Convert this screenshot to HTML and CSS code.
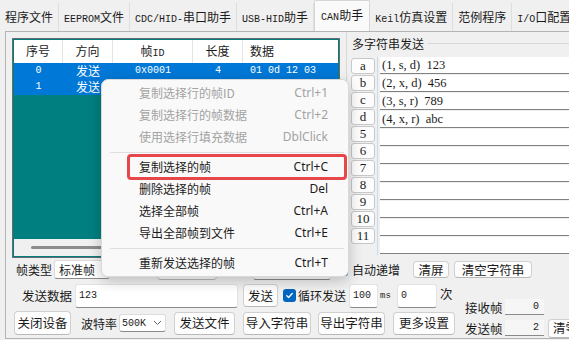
FILE: index.html
```html
<!DOCTYPE html>
<html lang="zh-CN">
<head>
    <meta charset="UTF-8">
    <title>CAN助手</title>
    <link rel="stylesheet" href="styles.css">
</head>
<body>
    <nav class="tabs">
        <span class="tab">程序文件</span>
        <span class="tab"><span class="mono">EEPROM</span>文件</span>
        <span class="tab"><span class="mono">CDC/HID-</span>串口助手</span>
        <span class="tab"><span class="mono">USB-HID</span>助手</span>
        <span class="tab active"><span class="mono">CAN</span>助手</span>
        <span class="tab"><span class="mono">Keil</span>仿真设置</span>
        <span class="tab">范例程序</span>
        <span class="tab"><span class="mono">I/O</span>口配置</span>
    </nav>

    <section class="page">
        <div class="top">
            <div class="frames">
                <div class="frame-row head">
                    <span>序号</span><span>方向</span><span>帧<span class="mono">ID</span></span><span>长度</span><span class="data">数据</span>
                </div>
                <div class="frame-row sel">
                    <span class="mono">0</span><span>发送</span><span class="mono">0x0001</span><span class="mono">4</span><span class="mono data">01 0d 12 03</span>
                </div>
                <div class="frame-row sel">
                    <span class="mono">1</span><span>发送</span><span></span><span></span><span></span>
                </div>
                <div class="frame-fill"></div>
                <div class="hscroll"><span class="thumb"></span></div>
            </div>

            <div class="multi">
                <div class="multi-head"><span>多字符串发送</span><i></i></div>
                <div class="multi-body">
                    <div class="keys">
                        <button class="key">a</button>
                        <button class="key">b</button>
                        <button class="key">c</button>
                        <button class="key">d</button>
                        <button class="key">5</button>
                        <button class="key">6</button>
                        <button class="key">7</button>
                        <button class="key">8</button>
                        <button class="key">9</button>
                        <button class="key">10</button>
                        <button class="key">11</button>
                    </div>
                    <div class="fields">
                        <div class="field">(1, s, d)&nbsp; 123</div>
                        <div class="field">(2, x, d)&nbsp; 456</div>
                        <div class="field">(3, s, r)&nbsp; 789</div>
                        <div class="field">(4, x, r)&nbsp; abc</div>
                        <div class="field"></div>
                        <div class="field"></div>
                        <div class="field"></div>
                        <div class="field"></div>
                        <div class="field"></div>
                        <div class="field"></div>
                        <div class="field"></div>
                    </div>
                </div>
            </div>
        </div>

        <div class="row row-a">
            <span class="lbl-type">帧类型</span>
            <span class="combo combo-type">标准帧</span>
            <span class="btn btn-kind"></span>
            <span class="edit edit-id"></span>
            <span class="check check-inc"></span>
            <span class="lbl-inc">自动递增</span>
            <button class="btn btn-clear">清屏</button>
            <button class="btn btn-clear-str">清空字符串</button>
        </div>

        <div class="lower">
            <div class="lower-left">
                <div class="row row-b">
                    <span class="lbl-data">发送数据</span>
                    <span class="edit edit-data mono">123</span>
                    <button class="btn btn-send">发送</button>
                    <span class="check check-loop"><svg width="9" height="9" viewBox="0 0 10 10"><path d="M2 5.2l2 2 4-4.4" fill="none" stroke="#fff" stroke-width="1.5" stroke-linecap="round" stroke-linejoin="round"/></svg></span>
                    <span class="lbl-loop">循环发送</span>
                    <span class="edit edit-ms mono">100</span>
                    <span class="lbl-ms mono">ms</span>
                    <span class="edit edit-count mono">0</span>
                    <span class="lbl-times">次</span>
                </div>
                <div class="row row-c">
                    <button class="btn btn-close">关闭设备</button>
                    <span class="lbl-baud">波特率</span>
                    <span class="combo combo-baud"><span class="mono">500K</span><svg width="9" height="6" viewBox="0 0 9 6"><path d="M1 1l3.5 3.5L8 1" fill="none" stroke="#666" stroke-width="1"/></svg></span>
                    <button class="btn btn-file">发送文件</button>
                    <button class="btn btn-import">导入字符串</button>
                    <button class="btn btn-export">导出字符串</button>
                    <button class="btn btn-more">更多设置</button>
                </div>
            </div>
            <div class="stats">
                <div class="stat"><span class="stat-lbl">接收帧</span><span class="stat-val mono">0</span></div>
                <div class="stat"><span class="stat-lbl">发送帧</span><span class="stat-val mono">2</span><button class="btn btn-reset">清零</button></div>
            </div>
        </div>

        <div class="menu">
            <div class="menu-item off"><span>复制选择行的帧ID</span><span class="menu-key">Ctrl+1</span></div>
            <div class="menu-item off"><span>复制选择行的帧数据</span><span class="menu-key">Ctrl+2</span></div>
            <div class="menu-item off"><span>使用选择行填充数据</span><span class="menu-key">DblClick</span></div>
            <div class="menu-sep"></div>
            <div class="menu-item mark"><span>复制选择的帧</span><span class="menu-key">Ctrl+C</span></div>
            <div class="menu-item"><span>删除选择的帧</span><span class="menu-key">Del</span></div>
            <div class="menu-item"><span>选择全部帧</span><span class="menu-key">Ctrl+A</span></div>
            <div class="menu-item"><span>导出全部帧到文件</span><span class="menu-key">Ctrl+E</span></div>
            <div class="menu-sep"></div>
            <div class="menu-item"><span>重新发送选择的帧</span><span class="menu-key">Ctrl+T</span></div>
        </div>
    </section>
</body>
</html>
```

FILE: styles.css
```css
* {
    box-sizing: border-box;
}

body {
    margin: 0;
    width: 569px;
    height: 340px;
    overflow: hidden;
    background-color: #f0f0f0;
    font-family: "Noto Sans CJK SC", sans-serif;
    font-size: 12px;
    color: #1b1b1b;
}

.mono {
    font-family: "Liberation Mono", "Noto Sans CJK SC", monospace;
    font-size: 10px;
}

/* tab strip */
.tabs {
    display: flex;
    align-items: flex-end;
    height: 31px;
    white-space: nowrap;
}

.tab {
    height: 28px;
    line-height: 27px;
    padding: 0 5px;
    border-right: 1px solid #dedede;
}

.tab.active {
    height: 31px;
    line-height: 28px;
    padding: 0 6px;
    background-color: #fafafa;
    border: 1px solid #d6d6d6;
    border-bottom: none;
    border-radius: 2px 2px 0 0;
}

/* tab page */
.page {
    position: relative;
    height: 308px;
    margin-left: 5px;
    padding-left: 6px;
    border: 1px solid #b4b4b4;
    border-right: none;
}

.top {
    display: flex;
    height: 226px;
}

.frames {
    display: flex;
    flex-direction: column;
    width: 328px;
    height: 220px;
    margin-top: 6px;
    padding: 1px;
    border: 1px solid #6a6a6a;
    background-color: #007f80;
}

.frame-row {
    display: grid;
    grid-template-columns: 49px 50px 80px 50px 1fr;
    height: 16px;
    line-height: 16px;
    text-align: center;
    white-space: nowrap;
}

.frame-row .data {
    text-align: left;
    padding-left: 7px;
}

.frame-row.head {
    height: 23px;
    line-height: 22px;
    background-color: #fff;
}

.frame-row.head > span {
    border-right: 1px solid #e4e4e4;
}

.frame-row.head > span:last-child {
    border-right: none;
}

.frame-row.sel {
    background-color: #0078d7;
    color: #fff;
}

.frame-fill {
    flex: 1;
}

.hscroll {
    height: 17px;
    padding: 7px 0 0 17px;
    background-color: #f0f0f0;
}

.thumb {
    display: block;
    width: 290px;
    height: 3px;
    border-radius: 2px;
    background-color: #8b8b8b;
}

/* multi string group */
.multi {
    flex: 1;
    margin-left: 6px;
    border-left: 1px solid #d8d8d8;
}

.multi-head {
    display: flex;
    height: 25px;
}

.multi-head span {
    padding: 1px 4px 0 5px;
    line-height: 22px;
}

.multi-head i {
    flex: 1;
    height: 1px;
    margin-top: 11px;
    background-color: #d8d8d8;
}

.multi-body {
    display: flex;
}

.keys {
    width: 30px;
    padding-left: 4px;
}

.key {
    display: block;
    width: 24px;
    height: 16px;
    margin: 1px 0;
    padding: 0;
    border: 1px solid #c8c8c8;
    border-radius: 3px;
    background-color: #fdfdfd;
    font-family: "Liberation Serif", serif;
    font-size: 13px;
    line-height: 14px;
    color: #1b1b1b;
}

.fields {
    flex: 1;
    padding-left: 2px;
    border-left: 1px solid #c9dbea;
}

.field {
    height: 17px;
    margin-bottom: 1px;
    padding-left: 2px;
    background-color: #fff;
    border-bottom: 1px solid #808080;
    font-family: "Liberation Serif", serif;
    font-size: 12.5px;
    line-height: 16px;
    white-space: nowrap;
}

/* bottom controls */
.row {
    display: flex;
    align-items: center;
    white-space: nowrap;
}

.row-a {
    height: 21px;
    margin-top: 1px;
}

.lower {
    display: flex;
    margin-top: 1px;
}

.lower-left {
    width: 443px;
}

.row-b {
    height: 29px;
    font-size: 12.5px;
}

.row-c {
    height: 26px;
    font-size: 12.5px;
}

.btn {
    display: block;
    height: 23px;
    padding: 0;
    border: 1px solid #d0d0d0;
    border-bottom-color: #b8b8b8;
    border-radius: 4px;
    background-color: #fdfdfd;
    font-family: inherit;
    font-size: 12.5px;
    line-height: 20px;
    color: #1b1b1b;
    white-space: nowrap;
}

.edit {
    display: block;
    height: 24px;
    padding-left: 3px;
    background-color: #fff;
    border: 1px solid #e3e3e3;
    border-bottom-color: #8a8a8a;
    border-radius: 3px;
    line-height: 22px;
}

.combo {
    display: flex;
    align-items: center;
    justify-content: space-between;
    height: 19px;
    padding: 0 4px;
    background-color: #fff;
    border: 1px solid #dcdcdc;
    border-bottom-color: #8a8a8a;
    border-radius: 3px;
}

.check {
    display: flex;
    align-items: center;
    justify-content: center;
    width: 13px;
    height: 13px;
    border-radius: 3px;
    background-color: #0067c0;
}

/* row a */
.lbl-type { margin-left: 4px; width: 36px; }
.combo-type { margin-left: 2px; width: 56px; }
.btn-kind { margin-left: 47px; width: 60px; height: 20px; }
.edit-id { margin-left: 36px; width: 78px; height: 20px; }
.check-inc { margin-left: 4px; }
.lbl-inc { margin-left: 4px; width: 48px; }
.btn-clear { margin-left: 13px; width: 36px; height: 17px; line-height: 14px; }
.btn-clear-str { margin-left: 5px; width: 78px; height: 17px; line-height: 14px; }

/* row b */
.lbl-data { margin-left: 10px; width: 50px; }
.edit-data { margin-left: 3px; width: 163px; }
.btn-send { margin-left: 5px; width: 35px; }
.check-loop { margin-left: 5px; }
.lbl-loop { margin-left: 2px; width: 48px; font-size: 12px; }
.edit-ms { margin-left: 3px; width: 29px; }
.lbl-ms { margin-left: 2px; width: 13px; font-size: 9px; }
.edit-count { margin-left: 4px; width: 40px; }
.lbl-times { margin-left: 3px; margin-top: -4px; }

/* row c */
.btn-close { margin-left: 2px; width: 57px; height: 24px; }
.lbl-baud { margin-left: 10px; width: 36px; font-size: 12px; }
.combo-baud { margin-left: 2px; width: 47px; height: 18px; padding: 0 3px 0 2px; }
.btn-file { margin-left: 8px; width: 61px; }
.btn-import { margin-left: 8px; width: 68px; }
.btn-export { margin-left: 7px; width: 67px; }
.btn-more { margin-left: 8px; width: 62px; }

/* frame counters */
.stats {
    display: flex;
    flex-direction: column;
    gap: 3px;
    margin-left: 10px;
    padding-top: 17px;
    white-space: nowrap;
}

.stat {
    display: flex;
    align-items: center;
    height: 18px;
}

.stat-lbl {
    width: 36px;
    font-size: 12.5px;
}

.stat-val {
    width: 39px;
    height: 16px;
    margin-left: 4px;
    padding-right: 5px;
    background-color: #f6f6f6;
    border-bottom: 1px solid #8a8a8a;
    text-align: right;
    line-height: 15px;
}

.btn-reset {
    width: 40px;
    height: 19px;
    margin-left: 4px;
    line-height: 16px;
    text-align: left;
    padding-left: 4px;
}

/* context menu */
.menu {
    position: absolute;
    left: 95px;
    top: 47px;
    width: 248px;
    padding: 2px 0;
    background-color: #f9f9f9;
    border: 1px solid #d9d9d9;
    border-radius: 7px;
    box-shadow: 0 4px 14px rgba(0, 0, 0, 0.22);
    white-space: nowrap;
}

.menu-item {
    position: relative;
    display: flex;
    justify-content: space-between;
    height: 22px;
    line-height: 22px;
    padding: 0 20px 0 37px;
}

.menu-item.off {
    color: #a3a3a3;
}

.menu-key {
    font-family: "Noto Sans", sans-serif;
}

.menu-item.mark::after {
    content: "";
    position: absolute;
    left: 25px;
    right: 1px;
    top: -2px;
    bottom: -2px;
    border: 3px solid #e6474b;
    border-radius: 4px;
}

.menu-sep {
    height: 8px;
    padding-top: 4px;
    margin: 0 4px 0 8px;
}

.menu-sep::before {
    content: "";
    display: block;
    height: 1px;
    background-color: #dedede;
}
```
